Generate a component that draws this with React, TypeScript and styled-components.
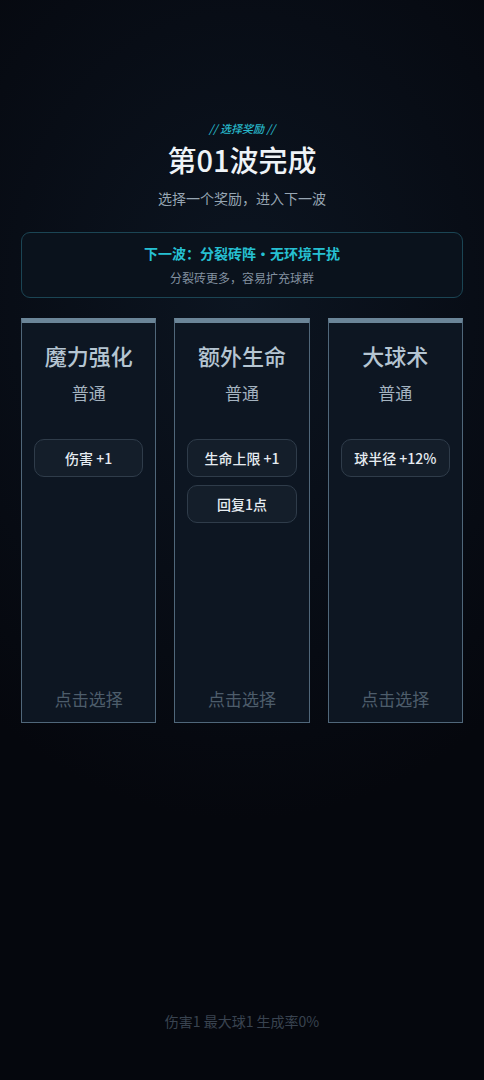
import React from "react";
import styled, { createGlobalStyle } from "styled-components";

const Global = createGlobalStyle`
  html, body { margin: 0; padding: 0; background: #05070d; }
  body { font-family: "Noto Sans CJK SC", "Noto Sans", sans-serif; }
  * { box-sizing: border-box; }
`;

const Page = styled.div`
  width: 484px;
  height: 1080px;
  background: radial-gradient(ellipse 420px 520px at 50% 300px, #0c1521 0%, #080d16 55%, #05070d 100%);
  display: flex;
  flex-direction: column;
  align-items: stretch;
  padding: 118px 21px 0;
  position: relative;
  overflow: hidden;
`;

const Header = styled.div`
  display: flex;
  flex-direction: column;
  align-items: center;
`;

const Tag = styled.div`
  color: #27b7c9;
  font-size: 11px;
  line-height: 20px;
  font-style: italic;
  font-weight: 500;
`;

const Title = styled.h1`
  margin: 1px 0 0;
  color: #eef3f7;
  font-size: 29px;
  line-height: 40px;
  font-weight: 500;
  letter-spacing: 0;
`;

const Subtitle = styled.div`
  margin-top: 9px;
  color: #97a6b3;
  font-size: 14px;
  line-height: 20px;
`;

const InfoBox = styled.div`
  margin-top: 24px;
  height: 66px;
  border: 1.5px solid #1b4554;
  border-radius: 9px;
  background: #0a121c;
  display: flex;
  flex-direction: column;
  align-items: center;
  justify-content: center;
  gap: 8px;
`;

const InfoTitle = styled.div`
  color: #26c0d2;
  font-size: 14px;
  font-weight: 700;
  line-height: 18px;
`;

const InfoSub = styled.div`
  color: #8391a0;
  font-size: 12px;
  line-height: 16px;
`;

const Cards = styled.div`
  margin-top: 20px;
  display: grid;
  grid-template-columns: repeat(3, 1fr);
  gap: 18px;
`;

const Card = styled.div`
  height: 405px;
  background: #0d1622;
  border: 1.5px solid #50677a;
  border-top: 5px solid #6b8598;
  display: flex;
  flex-direction: column;
  align-items: center;
  padding: 16px 12px 10px;
`;

const CardTitle = styled.div`
  color: #b5c5d2;
  font-size: 22px;
  line-height: 32px;
  font-weight: 500;
`;

const Rarity = styled.div`
  margin-top: 11px;
  color: #a4b3c0;
  font-size: 17px;
  line-height: 22px;
`;

const Effects = styled.div`
  margin-top: 35px;
  display: flex;
  flex-direction: column;
  gap: 8px;
  width: 100%;
`;

const Chip = styled.div`
  height: 38px;
  border-radius: 10px;
  background: #141e2a;
  border: 1px solid #2f3c4a;
  color: #e6ecf1;
  font-size: 14px;
  display: flex;
  align-items: center;
  justify-content: center;
  font-weight: 500;
`;

const Pick = styled.div`
  margin-top: auto;
  margin-bottom: 2px;
  color: #4d5d6b;
  font-size: 17px;
  line-height: 22px;
`;

const Footer = styled.div`
  position: absolute;
  left: 0;
  right: 0;
  top: 1011px;
  text-align: center;
  color: #394350;
  font-size: 14px;
  line-height: 20px;
`;

const cards = [
  { title: "魔力强化", effects: ["伤害 +1"] },
  { title: "额外生命", effects: ["生命上限 +1", "回复1点"] },
  { title: "大球术", effects: ["球半径 +12%"] },
];

export default function App() {
  return (
    <>
      <Global />
      <Page>
        <Header>
          <Tag>// 选择奖励 //</Tag>
          <Title>第01波完成</Title>
          <Subtitle>选择一个奖励，进入下一波</Subtitle>
        </Header>
        <InfoBox>
          <InfoTitle>下一波：分裂砖阵·无环境干扰</InfoTitle>
          <InfoSub>分裂砖更多，容易扩充球群</InfoSub>
        </InfoBox>
        <Cards>
          {cards.map((c) => (
            <Card key={c.title}>
              <CardTitle>{c.title}</CardTitle>
              <Rarity>普通</Rarity>
              <Effects>
                {c.effects.map((e) => (
                  <Chip key={e}>{e}</Chip>
                ))}
              </Effects>
              <Pick>点击选择</Pick>
            </Card>
          ))}
        </Cards>
        <Footer>伤害1 最大球1 生成率0%</Footer>
      </Page>
    </>
  );
}
